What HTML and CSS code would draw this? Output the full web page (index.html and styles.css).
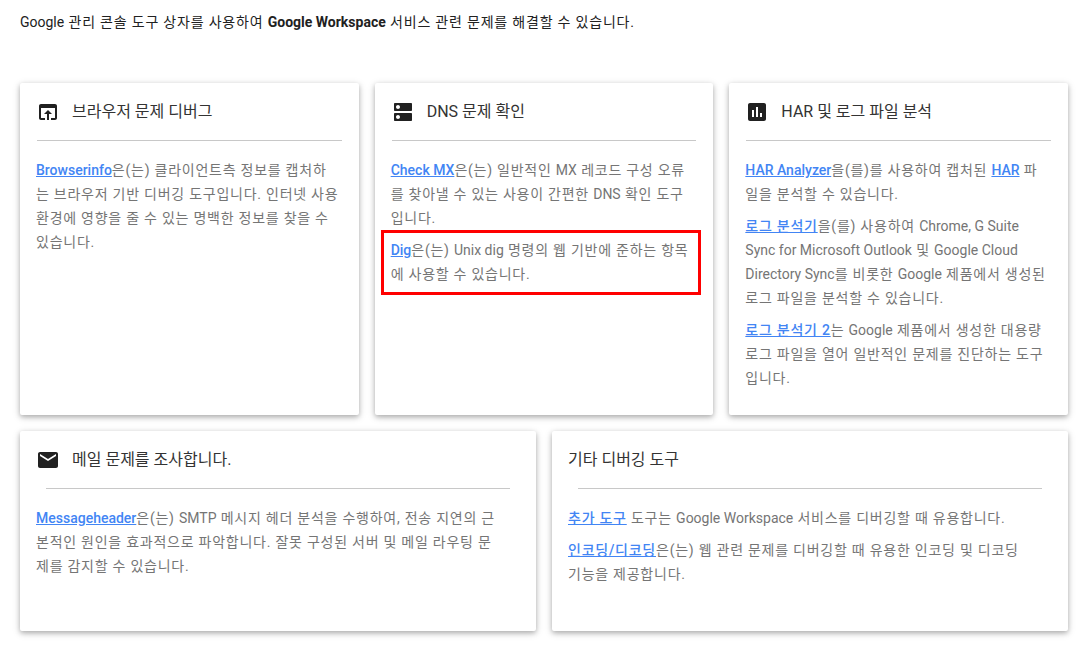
FILE: index.html
```html
<!DOCTYPE html>
<html lang="ko">
<head>
<meta charset="utf-8">
<title>Google 관리 콘솔 도구 상자</title>
<link rel="stylesheet" href="styles.css">
</head>
<body>
<p class="intro"><span class="lat">Google</span> 관리 콘솔 도구 상자를 사용하여 <b class="lat">Google Workspace</b> 서비스 관련 문제를 해결할 수 있습니다.</p>
<main class="grid">
  <section class="row row-top">
    <article class="card">
      <header class="card-head">
        <svg class="icon" viewBox="0 0 24 24"><path d="M19 4H5c-1.11 0-2 .9-2 2v12c0 1.1.89 2 2 2h4v-2H5V8h14v10h-4v2h4c1.1 0 2-.9 2-2V6c0-1.1-.89-2-2-2zm-7 6l-4 4h3v6h2v-6h3l-4-4z"/></svg>
        <h2>브라우저 문제 디버그</h2>
      </header>
      <div class="card-body">
        <p><a class="lat" href="#">Browserinfo</a>은(는) 클라이언트측 정보를 캡처하는 브라우저 기반 디버깅 도구입니다. 인터넷 사용 환경에 영향을 줄 수 있는 명백한 정보를 찾을 수 있습니다.</p>
      </div>
    </article>
    <article class="card">
      <header class="card-head">
        <svg class="icon" viewBox="0 0 24 24"><path d="M20 13H4c-.55 0-1 .45-1 1v6c0 .55.45 1 1 1h16c.55 0 1-.45 1-1v-6c0-.55-.45-1-1-1zM7 19c-1.1 0-2-.9-2-2s.9-2 2-2 2 .9 2 2-.9 2-2 2zM20 3H4c-.55 0-1 .45-1 1v6c0 .55.45 1 1 1h16c.55 0 1-.45 1-1V4c0-.55-.45-1-1-1zM7 9c-1.1 0-2-.9-2-2s.9-2 2-2 2 .9 2 2-.9 2-2 2z"/></svg>
        <h2>DNS 문제 확인</h2>
      </header>
      <div class="card-body">
        <p><a class="lat" href="#">Check MX</a>은(는) 일반적인 <span class="lat">MX</span> 레코드 구성 오류를 찾아낼 수 있는 사용이 간편한 <span class="lat">DNS</span> 확인 도구입니다.</p>
        <p class="highlight"><a class="lat" href="#">Dig</a>은(는) <span class="lat">Unix dig</span> 명령의 웹 기반에 준하는 항목에 사용할 수 있습니다.</p>
      </div>
    </article>
    <article class="card">
      <header class="card-head">
        <svg class="icon" viewBox="0 0 24 24"><path d="M19 3H5c-1.1 0-2 .9-2 2v14c0 1.1.9 2 2 2h14c1.1 0 2-.9 2-2V5c0-1.1-.9-2-2-2zM9 17H7v-7h2v7zm4 0h-2V7h2v10zm4 0h-2v-4h2v4z"/></svg>
        <h2>HAR 및 로그 파일 분석</h2>
      </header>
      <div class="card-body">
        <p><a class="lat" href="#">HAR Analyzer</a>을(를)를 사용하여 캡처된 <a class="lat" href="#">HAR</a> 파일을 분석할 수 있습니다.</p>
        <p><a href="#">로그 분석기</a>을(를) 사용하여 <span class="lat">Chrome, G Suite Sync for Microsoft Outlook</span> 및 <span class="lat">Google Cloud Directory Sync</span>를 비롯한 <span class="lat">Google</span> 제품에서 생성된 로그 파일을 분석할 수 있습니다.</p>
        <p><a href="#">로그 분석기 2</a>는 <span class="lat">Google</span> 제품에서 생성한 대용량 로그 파일을 열어 일반적인 문제를 진단하는 도구입니다.</p>
      </div>
    </article>
  </section>
  <section class="row row-bottom">
    <article class="card">
      <header class="card-head">
        <svg class="icon" viewBox="0 0 24 24"><path d="M20 4H4c-1.1 0-1.99.9-1.99 2L2 18c0 1.1.9 2 2 2h16c1.1 0 2-.9 2-2V6c0-1.1-.9-2-2-2zm0 4l-8 5-8-5V6l8 5 8-5v2z"/></svg>
        <h2>메일 문제를 조사합니다.</h2>
      </header>
      <div class="card-body">
        <p><a class="lat" href="#">Messageheader</a>은(는) <span class="lat">SMTP</span> 메시지 헤더 분석을 수행하여, 전송 지연의 근본적인 원인을 효과적으로 파악합니다. 잘못 구성된 서버 및 메일 라우팅 문<br>제를 감지할 수 있습니다.</p>
      </div>
    </article>
    <article class="card">
      <header class="card-head">
        <h2>기타 디버깅 도구</h2>
      </header>
      <div class="card-body">
        <p><a href="#">추가 도구</a> 도구는 <span class="lat">Google Workspace</span> 서비스를 디버깅할 때 유용합니다.</p>
        <p><a href="#">인코딩/디코딩</a>은(는) 웹 관련 문제를 디버깅할 때 유용한 인코딩 및 디코딩<br>기능을 제공합니다.</p>
      </div>
    </article>
  </section>
</main>
</body>
</html>
```

FILE: styles.css
```css
* { box-sizing: border-box; }
html, body { height: 100%; }
body {
  margin: 0;
  padding: 0 11px 0 20px;
  background: #fff;
  font-family: Roboto, "Noto Sans CJK KR", sans-serif;
  overflow: hidden;
}
.intro {
  margin: 0;
  padding-top: 12px;
  height: 83px;
  font-size: 14px;
  line-height: 20px;
  letter-spacing: 0.8px;
  color: #212121;
}
.intro b { font-weight: 700; }
.lat { letter-spacing: 0; }
.grid { display: flex; flex-direction: column; gap: 16px; }
.row { display: grid; gap: 16px; }
.row-top { grid-template-columns: repeat(3, 1fr); height: 332px; }
.row-bottom { grid-template-columns: repeat(2, 1fr); height: 200px; }
.card {
  background: #fff;
  border-radius: 2px;
  box-shadow: 0 2px 5px rgba(0,0,0,.26), 0 2px 10px rgba(0,0,0,.12);
  min-width: 0;
}
.card-head {
  position: relative;
  display: flex;
  align-items: center;
  gap: 12px;
  height: 58px;
  padding: 0 16px;
}
.card-head::after {
  content: "";
  position: absolute;
  left: 5%;
  right: 5%;
  bottom: 0;
  border-bottom: 1px solid #c8c8c8;
}
.card-head h2 {
  margin: 0;
  font-size: 16px;
  font-weight: 400;
  line-height: 24px;
  color: #333;
}
.icon { width: 24px; height: 24px; fill: #212121; flex: none; }
.card-body {
  padding: 17px 5.6% 0 16px;
  font-size: 14px;
  line-height: 24px;
  letter-spacing: 0.75px;
  color: #757575;
}
.card-body p { margin: 0 0 8px; }
.card-body a { color: #4285f4; font-weight: 500; text-decoration: underline; }
.highlight { position: relative; }
.highlight::after {
  content: "";
  position: absolute;
  top: -8px;
  left: -10px;
  right: -7px;
  bottom: -9px;
  border: 3px solid #f00;
}
```
